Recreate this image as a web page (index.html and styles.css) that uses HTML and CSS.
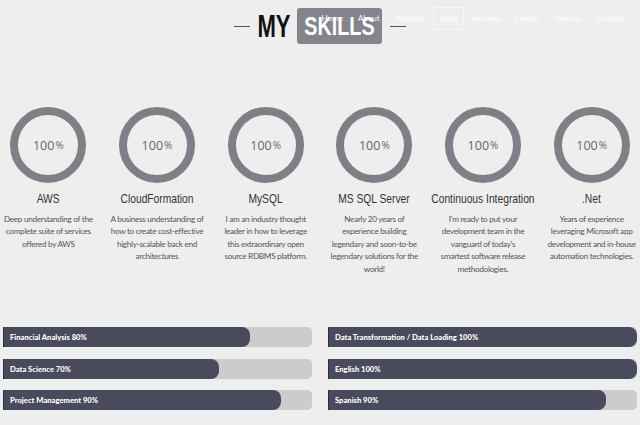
FILE: index.html
```html
<!DOCTYPE html>
<html lang="en">
<head>
<meta charset="utf-8">
<title>My Skills</title>
<link rel="stylesheet" href="styles.css">
</head>
<body>
<nav class="topnav">
  <a class="nav-link" href="#">Home</a>
  <a class="nav-link" href="#">About</a>
  <a class="nav-link" href="#">Portfolio</a>
  <a class="nav-link active" href="#">Skills</a>
  <a class="nav-link" href="#">Resume</a>
  <a class="nav-link" href="#">Clients</a>
  <a class="nav-link" href="#">Process</a>
  <a class="nav-link" href="#">Contact</a>
</nav>

<section class="skills">
  <h2 class="heading">
    <span class="dash"></span>
    <span class="my"><span class="squeeze">MY</span></span>
    <span class="boxed"><span class="squeeze">SKILLS</span></span>
    <span class="dash"></span>
  </h2>

  <div class="circles">
    <div class="skill">
      <div class="ring"><span class="num">100</span><span class="pct">%</span></div>
      <h3 class="skill-name"><span class="squeeze">AWS</span></h3>
      <p class="skill-desc">Deep understanding of the<br>complete suite of services<br>offered by AWS</p>
    </div>
    <div class="skill">
      <div class="ring"><span class="num">100</span><span class="pct">%</span></div>
      <h3 class="skill-name"><span class="squeeze">CloudFormation</span></h3>
      <p class="skill-desc">A business understanding of<br>how to create cost-effective<br>highly-scalable back end<br>architectures</p>
    </div>
    <div class="skill">
      <div class="ring"><span class="num">100</span><span class="pct">%</span></div>
      <h3 class="skill-name"><span class="squeeze">MySQL</span></h3>
      <p class="skill-desc">I am an industry thought<br>leader in how to leverage<br>this extraordinary open<br>source RDBMS platform.</p>
    </div>
    <div class="skill">
      <div class="ring"><span class="num">100</span><span class="pct">%</span></div>
      <h3 class="skill-name"><span class="squeeze">MS SQL Server</span></h3>
      <p class="skill-desc">Nearly 20 years of<br>experience building<br>legendary and soon-to-be<br>legendary solutions for the<br>world!</p>
    </div>
    <div class="skill">
      <div class="ring"><span class="num">100</span><span class="pct">%</span></div>
      <h3 class="skill-name"><span class="squeeze">Continuous Integration</span></h3>
      <p class="skill-desc">I'm ready to put your<br>development team in the<br>vanguard of today's<br>smartest software release<br>methodologies.</p>
    </div>
    <div class="skill">
      <div class="ring"><span class="num">100</span><span class="pct">%</span></div>
      <h3 class="skill-name"><span class="squeeze">.Net</span></h3>
      <p class="skill-desc">Years of experience<br>leveraging Microsoft app<br>development and in-house<br>automation technologies.</p>
    </div>
  </div>

  <div class="bars">
    <div class="bar-col">
      <div class="bar"><div class="fill" style="width:80%"><span class="label">Financial Analysis 80%</span></div></div>
      <div class="bar"><div class="fill" style="width:70%"><span class="label">Data Science 70%</span></div></div>
      <div class="bar"><div class="fill" style="width:90%"><span class="label">Project Management 90%</span></div></div>
    </div>
    <div class="bar-col">
      <div class="bar"><div class="fill" style="width:100%"><span class="label">Data Transformation / Data Loading 100%</span></div></div>
      <div class="bar"><div class="fill" style="width:100%"><span class="label">English 100%</span></div></div>
      <div class="bar"><div class="fill" style="width:90%"><span class="label">Spanish 90%</span></div></div>
    </div>
  </div>
</section>
</body>
</html>
```

FILE: styles.css
```css
html, body {
  margin: 0;
  padding: 0;
}
body {
  background: #eeeeee;
  font-family: Lato, "Open Sans", sans-serif;
  color: #555;
  width: 640px;
  height: 425px;
  overflow: hidden;
  position: relative;
}

/* condensed look: the installed fonts have no condensed face */
.squeeze {
  display: inline-block;
  white-space: nowrap;
  transform: scaleX(0.76);
  transform-origin: center;
}

/* top navigation overlay */
.topnav {
  position: absolute;
  top: 7px;
  right: 9px;
  display: flex;
  gap: 1px;
  z-index: 5;
}
.nav-link {
  display: block;
  height: 21px;
  line-height: 21px;
  padding: 0 6px;
  font-family: Lato, sans-serif;
  font-size: 8px;
  color: #ffffff;
  text-decoration: none;
  border: 1px solid transparent;
  border-radius: 2px;
}
.nav-link.active {
  border-color: #f8f8f8;
}

/* heading */
.heading {
  margin: 8px 0 0;
  height: 36px;
  display: flex;
  align-items: center;
  justify-content: center;
  font-family: "Liberation Sans", Arial, sans-serif;
  font-weight: 700;
}
.dash {
  width: 16px;
  border-top: 1px solid #555;
}
.my {
  width: 33px;
  margin: 0 7px;
  display: flex;
  justify-content: center;
  font-size: 32px;
  color: #111;
  line-height: 36px;
}
.my .squeeze {
  transform: scaleX(0.69);
}
.boxed {
  width: 85px;
  margin-right: 8px;
  height: 36px;
  display: flex;
  justify-content: center;
  background: #84858c;
  color: #fff;
  font-size: 25px;
  line-height: 37px;
  border-radius: 3px;
}
.boxed .squeeze {
  transform: scaleX(0.79);
}

/* circles */
.circles {
  display: grid;
  grid-template-columns: repeat(6, minmax(0, 1fr));
  width: 652px;
  margin: 63px 0 0 -6px;
}
.skill {
  min-width: 0;
  display: flex;
  flex-direction: column;
  align-items: center;
  text-align: center;
}
.ring {
  width: 60px;
  height: 60px;
  border: 8px solid #7e7f87;
  border-radius: 50%;
  display: flex;
  align-items: center;
  justify-content: center;
  color: #666;
  font-family: "Open Sans", sans-serif;
}
.num {
  font-size: 12.5px;
}
.pct {
  font-size: 10px;
  margin-left: 1px;
}
.skill-name {
  margin: 7px 0 0;
  font-family: "Liberation Sans", Arial, sans-serif;
  font-weight: 400;
  font-size: 13.5px;
  line-height: 18px;
  color: #333;
  display: flex;
  justify-content: center;
  width: 100%;
}
.skill-desc {
  margin: 5px 0 0;
  font-size: 8.2px;
  letter-spacing: -0.3px;
  line-height: 12.4px;
  color: #555;
  white-space: nowrap;
}

/* bars */
.bars {
  display: grid;
  grid-template-columns: 1fr 1fr;
  gap: 16px;
  margin: 52px 3px 0;
}
.bar-col {
  display: flex;
  flex-direction: column;
  gap: 11.5px;
}
.bar {
  height: 20px;
  background: #cccccc;
  border-radius: 0 5px 5px 0;
}
.fill {
  height: 100%;
  background: #484b5b;
  border-left: 1px solid #2c2e38;
  box-sizing: border-box;
  border-radius: 0 8px 8px 0;
  display: flex;
  align-items: center;
  padding-left: 6px;
}
.label {
  color: #fff;
  font-weight: 900;
  font-size: 7.6px;
  white-space: nowrap;
}
```
